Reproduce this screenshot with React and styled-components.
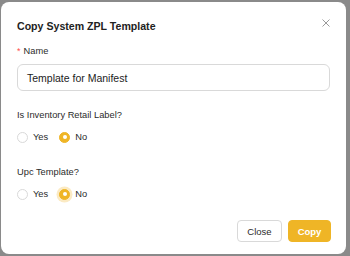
import React from "react";
import styled, { createGlobalStyle } from "styled-components";

const Global = createGlobalStyle`
  html, body { margin: 0; padding: 0; }
  body {
    background: #8a8a8a;
    font-family: "Liberation Sans", Arial, sans-serif;
    width: 350px;
    height: 256px;
    overflow: hidden;
  }
`;

const Stage = styled.div`
  padding: 2px 4px 2px 1px;
`;

const Modal = styled.div`
  width: 345px;
  height: 252px;
  box-sizing: border-box;
  background: #fff;
  border-radius: 8px;
  padding: 14px 16px 12px 16px;
  display: flex;
  flex-direction: column;
  color: rgba(0, 0, 0, 0.88);
`;

const Header = styled.div`
  display: flex;
  justify-content: space-between;
  align-items: flex-start;
  height: 18px;
`;

const Title = styled.div`
  font-size: 10.6px;
  font-weight: 700;
  line-height: 16px;
  padding-top: 2px;
  color: #222;
`;

const CloseX = styled.button`
  border: 0;
  background: none;
  padding: 0;
  margin: 1px -2px 0 0;
  width: 12px;
  height: 12px;
  display: flex;
  align-items: center;
  justify-content: center;
  cursor: pointer;
`;

const Label = styled.div`
  font-size: 9.3px;
  line-height: 14px;
  margin-top: ${(p) => p.$mt}px;
  color: #2b2b2b;
`;

const Req = styled.span`
  color: #ff4d4f;
  margin-right: 3px;
  font-size: 9px;
`;

const Input = styled.div`
  margin-top: 6px;
  height: 27px;
  box-sizing: border-box;
  border: 1px solid #d9d9d9;
  border-radius: 6px;
  padding: 0 9px;
  display: flex;
  align-items: center;
  font-size: 10.5px;
  color: #222;
`;

const RadioRow = styled.div`
  display: flex;
  align-items: center;
  height: 16px;
  margin-top: 7px;
  gap: 11px;
`;

const RadioItem = styled.label`
  display: flex;
  align-items: center;
  gap: 5px;
  font-size: 9.3px;
  color: #2b2b2b;
`;

const Circle = styled.span`
  width: 11px;
  height: 11px;
  box-sizing: border-box;
  border-radius: 50%;
  border: 1px solid ${(p) => (p.$on ? "#efb526" : "#d9d9d9")};
  background: ${(p) => (p.$on ? "#efb526" : "#fff")};
  display: flex;
  align-items: center;
  justify-content: center;
  box-shadow: ${(p) => (p.$focus ? "0 0 0 2.5px rgba(239, 181, 38, 0.28)" : "none")};
  &::after {
    content: "";
    display: ${(p) => (p.$on ? "block" : "none")};
    width: 4px;
    height: 4px;
    border-radius: 50%;
    background: #fff;
  }
`;

const Footer = styled.div`
  margin-top: auto;
  display: flex;
  justify-content: flex-end;
  gap: 6px;
  margin-right: -1px;
`;

const Button = styled.button`
  height: 22px;
  width: ${(p) => p.$w}px;
  box-sizing: border-box;
  padding: 0;
  border-radius: 4px;
  font-family: inherit;
  font-size: 9.5px;
  font-weight: ${(p) => (p.$primary ? 700 : 400)};
  border: 1px solid ${(p) => (p.$primary ? "#efb526" : "#d9d9d9")};
  background: ${(p) => (p.$primary ? "#efb526" : "#fff")};
  color: ${(p) => (p.$primary ? "#fff" : "#2b2b2b")};
  cursor: pointer;
`;

function Radio({ on, focus, children }) {
  return (
    <RadioItem>
      <Circle $on={on} $focus={focus} />
      {children}
    </RadioItem>
  );
}

export default function App() {
  return (
    <>
      <Global />
      <Stage>
        <Modal>
          <Header>
            <Title>Copy System ZPL Template</Title>
            <CloseX aria-label="close">
              <svg width="8" height="8" viewBox="0 0 8 8">
                <path d="M0.5 0.5 L7.5 7.5 M7.5 0.5 L0.5 7.5" stroke="#9a9a9a" strokeWidth="1" />
              </svg>
            </CloseX>
          </Header>
          <Label $mt={10}>
            <Req>*</Req>Name
          </Label>
          <Input>Template for Manifest</Input>
          <Label $mt={17}>Is Inventory Retail Label?</Label>
          <RadioRow>
            <Radio>Yes</Radio>
            <Radio on>No</Radio>
          </RadioRow>
          <Label $mt={20}>Upc Template?</Label>
          <RadioRow>
            <Radio>Yes</Radio>
            <Radio on focus>No</Radio>
          </RadioRow>
          <Footer>
            <Button $w={45}>Close</Button>
            <Button $primary $w={43}>Copy</Button>
          </Footer>
        </Modal>
      </Stage>
    </>
  );
}
